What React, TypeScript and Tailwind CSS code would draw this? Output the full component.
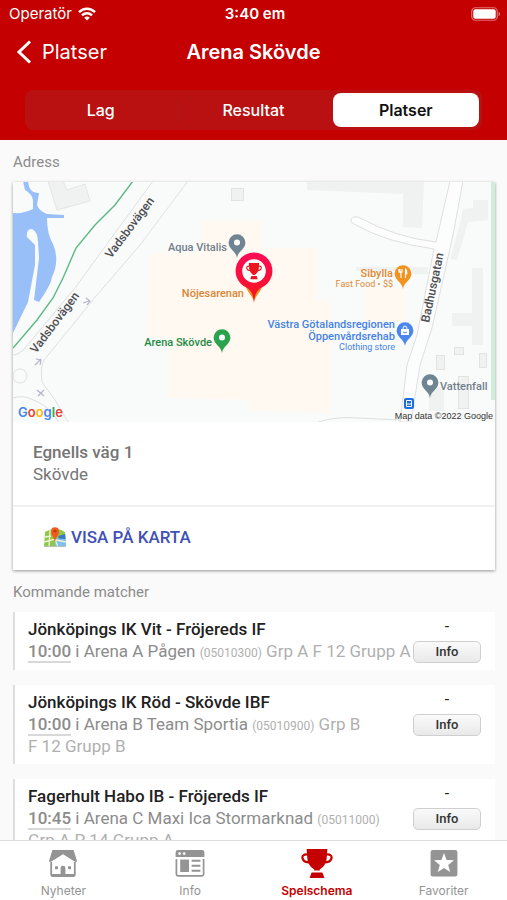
import { useState } from "react";
import type { ReactNode } from "react";
import clsx from "clsx";

type Match = {
  teams: string;
  time: string;
  place: string;
  id: string;
  group: string;
  division: string;
};

const matches: Match[] = [
  { teams: "Jönköpings IK Vit - Fröjereds IF", time: "10:00", place: "Arena A Pågen", id: "05010300", group: "Grp A", division: "F 12 Grupp A" },
  { teams: "Jönköpings IK Röd - Skövde IBF", time: "10:00", place: "Arena B Team Sportia", id: "05010900", group: "Grp B", division: "F 12 Grupp B" },
  { teams: "Fagerhult Habo IB - Fröjereds IF", time: "10:45", place: "Arena C Maxi Ica Stormarknad", id: "05011000", group: "Grp A", division: "P 14 Grupp A" },
];

const segments = ["Lag", "Resultat", "Platser"];

function WifiIcon() {
  return (
    <svg viewBox="0 0 18 14" className="h-3.5 w-[18px]" fill="none" stroke="currentColor" strokeWidth="2.5">
      <path d="M1 5.2 C5.5 0.6 12.5 0.6 17 5.2" />
      <path d="M4 8.4 C6.8 5.6 11.2 5.6 14 8.4" />
      <path d="M9 13.6 L6.2 10.7 C7.8 9.2 10.2 9.2 11.8 10.7 Z" fill="currentColor" stroke="none" />
    </svg>
  );
}

function BatteryIcon() {
  return (
    <svg viewBox="0 0 30 14" className="h-3.5 w-[30px]">
      <rect x="0.75" y="0.75" width="25.5" height="12.5" rx="3.6" fill="none" stroke="#fff" strokeOpacity="0.45" strokeWidth="1.2" />
      <rect x="2.3" y="2.3" width="22.4" height="9.4" rx="2" fill="#fff" />
      <path d="M27.6 4.8 C29.6 5.6 29.6 8.4 27.6 9.2 Z" fill="#fff" fillOpacity="0.5" />
    </svg>
  );
}

function TrophyShape() {
  return (
    <>
      <path d="M5.6 0 H26.4 L25.6 10 C25 15.5 21.5 19 18.8 20.2 V21.6 H13.2 V20.2 C10.5 19 7 15.5 6.4 10 Z" fill="currentColor" />
      <path d="M7 5.6 C3 4.8 0.8 6.8 1.6 9.6 C2.4 12.2 5.5 13.6 9.6 13.4 M25 5.6 C29 4.8 31.2 6.8 30.4 9.6 C29.6 12.2 26.5 13.6 22.4 13.4" fill="none" stroke="currentColor" strokeWidth="2.2" />
      <path d="M10.6 23.4 H21.4 L23.4 29 H8.6 Z" fill="currentColor" />
    </>
  );
}

function TrophyIcon() {
  return (
    <svg viewBox="0 0 32 29" className="h-[29px] w-8">
      <TrophyShape />
    </svg>
  );
}

function HouseIcon() {
  return (
    <svg viewBox="0 0 28 28" className="size-7" fill="currentColor">
      <path d="M3.4 1 H24.6 L28 12 C27.8 13 26.6 13.2 25.6 12.6 L14 5.2 L2.4 12.6 C1.4 13.2 0.2 13 0 12 Z" />
      <path d="M2.2 13 V25.2 C2.2 26.3 2.9 27 4 27 H24 C25.1 27 25.8 26.3 25.8 25.2 V13" fill="none" stroke="currentColor" strokeWidth="1.8" />
      <path d="M2 25 H26 V26.2 Q26 27.6 24.4 27.6 H3.6 Q2 27.6 2 26.2 Z" />
      <path d="M11.6 26 V19 Q11.6 16.8 14 16.8 Q16.4 16.8 16.4 19 V26 Z" />
      <rect x="6" y="17.2" width="3" height="3" rx="0.6" />
      <rect x="19" y="17.2" width="3" height="3" rx="0.6" />
    </svg>
  );
}

function NewsIcon() {
  return (
    <svg viewBox="0 0 30 28" className="h-7 w-[30px]" fill="currentColor">
      <path d="M3 1 H27 Q29.4 1 29.4 3.4 V8 H0.6 V3.4 Q0.6 1 3 1 Z" />
      <circle cx="4.6" cy="4.6" r="1.3" fill="#fff" />
      <circle cx="9.2" cy="4.6" r="1.3" fill="#fff" />
      <path d="M1.4 10 V25.2 Q1.4 26.8 3 26.8 H27 Q28.6 26.8 28.6 25.2 V10" fill="none" stroke="currentColor" strokeWidth="1.7" />
      <rect x="5.2" y="10.6" width="8.8" height="12.4" />
      <path d="M16.6 11.8 H25.4 M16.6 16.8 H25.4 M16.6 21.8 H25.4" stroke="currentColor" strokeWidth="1.9" />
    </svg>
  );
}

function StarIcon() {
  return (
    <svg viewBox="0 0 28 28" className="size-7">
      <rect x="0.6" y="1" width="26.8" height="26.4" rx="2.2" fill="currentColor" />
      <path d="M14 4 L16.6 11 L24 11.3 L18.2 15.9 L20.2 23 L14 18.9 L7.8 23 L9.8 15.9 L4 11.3 L11.4 11 Z" fill="#fff" />
    </svg>
  );
}

function MapEmoji() {
  return (
    <svg viewBox="0 0 24 24" className="size-6">
      <path d="M2 7 L7 4.5 L12 6 L17 4.5 L22 7 L23 22 H1 Z" fill="#8fc74a" />
      <path d="M12 14 L22.4 12 L23 22 H12 Z" fill="#7cc0f0" />
      <path d="M15 11 L22.2 9 L22.5 14 L16 13.5 Z" fill="#3b78c4" />
      <path d="M1.3 17 L12 14 L15 22 M7 5 L6 22 M2 12 L8 11 M13 15 L22.6 17" fill="none" stroke="#f3f1d4" strokeWidth="1.3" />
      <path d="M1 21.4 H23" stroke="#b9c3b4" strokeWidth="1" />
      <path d="M12 17 C11.4 12.4 8 10.6 8 6.2 A4 4 0 0 1 16 6.2 C16 10.6 12.6 12.4 12 17 Z" fill="#f05a1c" />
      <circle cx="12" cy="6" r="1.6" fill="#c23a10" />
    </svg>
  );
}

function Pin({ x, y, color, children }: { x: number; y: number; color: string; children?: ReactNode }) {
  return (
    <g transform={`translate(${x} ${y})`}>
      <path d="M0 15 C-1 8 -8.4 6.4 -8.4 -0.4 A8.4 8.4 0 0 1 8.4 -0.4 C8.4 6.4 1 8 0 15 Z" fill={color} />
      {children ?? <circle r="3" cy="-0.6" fill="#fff" />}
    </g>
  );
}

function AreaMap() {
  return (
    <svg
      viewBox="0 0 482 240"
      preserveAspectRatio="xMidYMid slice"
      className="block h-60 w-full bg-[#f9fafa] font-[Roboto,sans-serif]"
      role="img"
      aria-label="Karta"
    >
      <defs>
        <linearGradient id="pin" x1="0" y1="0" x2="0" y2="1">
          <stop offset="0" stopColor="#ff0a58" />
          <stop offset="1" stopColor="#f5161c" />
        </linearGradient>
      </defs>

      {/* buildings */}
      <g fill="#f0f1f1">
        <path d="M35 -1 L44 28 L77 19 L72 2 L54 8 L50 -1 Z" stroke="#e4e5e5" />
        <rect x="218.5" y="6.5" width="12" height="12" stroke="#e2e3e3" />
        <path d="M294 -1 V8 L390 12 V45 L409 46 L411 -1 Z" />
        <path d="M450 27 L460 26 V18 L475 18 V38 L455 40 L444 78 L437 77 L447 42 Z" />
        <path d="M459 86 H470 V163 H459 V144 H439 V131 H459 Z" />
        <path d="M343 85 H415 V92 H399 V89 H343 Z" />
        <g stroke="#e2e3e3">
          <rect x="423.5" y="173.5" width="8" height="14" />
          <rect x="441.5" y="165.5" width="9" height="7" />
          <rect x="466.5" y="171.5" width="7" height="14" />
          <rect x="445.5" y="194.5" width="10" height="32" />
        </g>
        <path d="M416 205 H431 V229 H416 Z" />
      </g>
      <path d="M189 38 H250 V66 H304 V118 H317 V231 L247 229 L235 226 V218 L155 216 V156 H134 L137 71 L189 70 Z" fill="#fff9f1" />
      <path d="M352 106 H392 V140 H352 Z" fill="#fff9f1" />

      {/* water and parkland */}
      <path
        d="M10 -1 L12 8 Q19 12 20 18 L20 27 Q10 32 0 31 V151 L15 120 L22 83 V63 L14 55 Q13 47 19 47 Q25 50 25 60 L26 76 L21 118 L26 120 Q38 103 39 95 Q47 78 40 62 Q34 52 34 36 L51 36 V33 L34 32 Q26 29 24 23 L26 11 Q16 12 15 -1 Z"
        fill="#99bff8"
      />
      <path d="M120 -1 L102 23 L82 43 L63 66 L50 96 L40 116 L24 138 L0 166" fill="none" stroke="#5cb885" strokeWidth="1.4" />
      <path d="M478 0 H482 V218 H478 Z" fill="#ceeedb" />

      {/* roads */}
      <g fill="none" stroke="#dedfe1">
        <path d="M140 -1 L102 51 L62 106 L12 166 Q6 173 0 173" />
        <path d="M175 -1 L127 63 L84 113 L31 178 Q27 184 29 200 L42 218 L55 240" />
        <circle cx="7" cy="194" r="7" />
        <path d="M0 216 Q10 213 18 217 Q32 222 40 232 L46 240" />
        <path d="M437 -1 L423 60 Q384 56 345 35 Q338 34 338 39 Q338 41 343 43 Q372 60 421 67 L404 153 L394 183 L387 240 H398 L407 183 L419 146 L440 53 L450 -1" fill="#fdfdfd" />
        <path d="M305 240 Q325 234 345 236 L387 238" />
      </g>
      <g fill="none" stroke="#b4b5cb" strokeWidth="1.2">
        <path d="M70 121 L76 119 M73 116 L77 119 L74 123" />
        <path d="M22 183 L28 177 M23 177 L28 178 L27 183" />
        <path d="M24 208 L31 214 M25 214 L31 208" />
      </g>

      <g fontSize="12" fontWeight="500" fill="#4c4e52">
        <text transform="translate(98 77) rotate(-53)">Vadsbovägen</text>
        <text transform="translate(23 172) rotate(-53)">Vadsbovägen</text>
        <text transform="translate(416 141) rotate(-78)">Badhusgatan</text>
      </g>

      {/* places */}
      <Pin x={224} y={61} color="#6f8594" />
      <Pin x={209} y={156} color="#2ba24c" />
      <Pin x={417} y={201} color="#6f8594" />
      <Pin x={390} y={92} color="#f0931f">
        <path d="M-3 -5 V-2 Q-3 -1 -2 -1 V4 M-4 -5 V-2 H-1 V-5 M2.5 4 V-5 Q4 -4 3.8 0 H2.5" fill="none" stroke="#fff" strokeWidth="1.1" />
      </Pin>
      <Pin x={392} y={149} color="#4a86ee">
        <path d="M-4 -2 H4 V4 H-4 Z" fill="#fff" />
        <path d="M-2 -2 Q-2 -5 0 -5 Q2 -5 2 -2" fill="none" stroke="#fff" />
        <path d="M-2 1 Q0 3 2 1" fill="none" stroke="#4a86ee" />
      </Pin>
      <g transform="translate(241 89)">
        <path d="M-8 15 H8 C7.500 20 3 23 0 30 C-3 23 -7.500 20 -8 15 Z" fill="#f0931f" />
        <path d="M0 32 C-0.6 25 -2 21 -6 17.400 A18.400 18.400 0 1 1 6 17.400 C2 21 0.6 25 0 32 Z" fill="url(#pin)" />
        <circle r="11.8" fill="#fff" />
        <g transform="translate(-8 -8) scale(0.5 0.56)" color="#ea1620">
          <TrophyShape />
        </g>
      </g>
      <rect x="391" y="216" width="10" height="11" rx="2" fill="#1a6ee0" />
      <path d="M393.5 218.5 H398.5 V224.5 H393.5 Z M393.5 222 H398.5" fill="none" stroke="#fff" />

      <g fontSize="11" fontWeight="500" textAnchor="end">
        <text x="214" y="69" fill="#71808d">Aqua Vitalis</text>
        <text x="231" y="115" fill="#d98538">Nöjesarenan</text>
        <text x="199" y="164" fill="#1f8a43">Arena Skövde</text>
        <text x="380" y="95" fill="#e08a32">Sibylla</text>
        <text x="380" y="105" fontSize="9" fontWeight="400" fill="#e08a32">Fast Food • $$</text>
        <text x="382" y="146" fill="#4583e6">Västra Götalandsregionen</text>
        <text x="382" y="158" fill="#4583e6">Öppenvårdsrehab</text>
        <text x="382" y="168" fontSize="9" fontWeight="400" fill="#4583e6">Clothing store</text>
      </g>
      <text x="427" y="208" fontSize="11" fontWeight="500" fill="#71808d">Vattenfall</text>
      <text x="480" y="237" fontSize="9" textAnchor="end" fill="#333" className="font-['Liberation_Sans',sans-serif]">Map data ©2022 Google</text>
      <text x="5" y="235" fontSize="13" fontWeight="600" className="font-[Inter,sans-serif]">
        <tspan fill="#4285f4">G</tspan>
        <tspan fill="#ea4335">o</tspan>
        <tspan fill="#fbbc05">o</tspan>
        <tspan fill="#4285f4">g</tspan>
        <tspan fill="#34a853">l</tspan>
        <tspan fill="#ea4335">e</tspan>
      </text>
    </svg>
  );
}

function MatchCard({ match }: { match: Match }) {
  return (
    <li className="flex border-l-2 border-[#dedede] bg-white pt-1.5 pr-3.5 pb-[7px] pl-[13px]">
      <div className="min-w-0 flex-1 text-[17px] leading-[22px] text-[#8c8c8c]">
        <h3 className="font-medium text-[#212121]">{match.teams}</h3>
        <p>
          <span className="border-b-2 border-[#d8d8d8] font-medium">{match.time}</span> i {match.place}{" "}
          <span className="text-xs leading-none text-[#b0b0b0]">({match.id})</span>{" "}
          <span className="text-[#b0b0b0]">
            <span className="whitespace-nowrap">{match.group}</span>{" "}
            <span className="whitespace-nowrap">{match.division}</span>
          </span>
        </p>
      </div>
      <div className="flex w-[68px] shrink-0 flex-col text-center">
        <span className="h-[23px] text-base leading-[18px] text-[#212121]">-</span>
        <button className="h-[22px] rounded-[5px] border border-[#cfcfcf] bg-linear-to-b from-[#fafafa] to-[#e9e9e9] text-[13px] font-medium leading-5 text-[#333]">
          Info
        </button>
      </div>
    </li>
  );
}

const tabs = [
  { label: "Nyheter", icon: <HouseIcon /> },
  { label: "Info", icon: <NewsIcon /> },
  { label: "Spelschema", icon: <TrophyIcon /> },
  { label: "Favoriter", icon: <StarIcon /> },
];

export default function App() {
  const [segment, setSegment] = useState("Platser");
  const [tab, setTab] = useState("Spelschema");

  return (
    <div className="flex h-screen flex-col bg-[#fafafa] font-[Roboto,sans-serif]">
      <header className="shrink-0 bg-[#c40000] pb-2.5 font-[Inter,sans-serif] text-white">
        {/* Status bar */}
        <div className="grid h-7 grid-cols-3 items-center pr-1.5 pl-[9px] text-[15px]">
          <div className="flex items-center gap-1.5">
            <span>Operatör</span>
            <WifiIcon />
          </div>
          <span className="text-center font-semibold">3:40 em</span>
          <div className="flex justify-end">
            <BatteryIcon />
          </div>
        </div>

        {/* Title */}
        <div className="grid h-12 grid-cols-[1fr_auto_1fr] items-center px-4">
          <button className="flex items-center gap-2.5 text-xl">
            <svg viewBox="0 0 16 24" className="h-6 w-4" fill="none" stroke="currentColor" strokeWidth="3">
              <path d="M14 1.5 L3 12 L14 22.5" />
            </svg>
            Platser
          </button>
          <h1 className="text-xl font-semibold">Arena Skövde</h1>
        </div>

        {/* Segments */}
        <div className="mx-[25px] mt-3.5 grid h-10 grid-cols-3 rounded-lg bg-[#b91011]">
          {segments.map((item, i) => (
            <button
              key={item}
              onClick={() => setSegment(item)}
              aria-pressed={segment === item}
              className={clsx(
                "text-base",
                segment === item ? "m-[3px] rounded-lg bg-white font-semibold text-[#111]" : "my-2 font-medium",
                i === 0 && segment === "Platser" && "border-r border-[#a81a1a]"
              )}
            >
              {item}
            </button>
          ))}
        </div>
      </header>

      <main className="min-h-0 flex-1 overflow-y-auto pr-3 pl-[13px] [scrollbar-width:none]">
        <h2 className="pt-3 pb-2.5 text-[15px] leading-5 text-[#8c8c8c]">Adress</h2>
        <section className="bg-white shadow-[0_1px_3px_rgba(0,0,0,0.4)]">
          <AreaMap />
          <address className="px-5 pt-[19px] pb-5 text-[17px] leading-[22px] text-[#757575] not-italic">
            <div className="font-medium">Egnells väg 1</div>
            <div>Skövde</div>
          </address>
          <div className="border-t-2 border-[#f0f0f0] pt-[18px] pb-[21px] pl-[30px]">
            <a href="#karta" className="inline-flex items-center gap-1 align-top text-[17px] font-medium leading-6 text-[#3f51b5]">
              <MapEmoji />
              VISA PÅ KARTA
            </a>
          </div>
        </section>

        <h2 className="pt-3 pb-2.5 text-[15px] leading-5 text-[#8c8c8c]">Kommande matcher</h2>
        <ul className="space-y-[15px]">
          {matches.map((match) => (
            <MatchCard key={match.id} match={match} />
          ))}
        </ul>
      </main>

      {/* Tab bar */}
      <nav className="flex h-[60px] shrink-0 border-t border-[#dcdcdc] bg-white font-[Inter,sans-serif]">
        {tabs.map(({ label, icon }) => (
          <button
            key={label}
            onClick={() => setTab(label)}
            className={clsx(
              "flex flex-1 flex-col items-center pt-2 text-xs",
              tab === label ? "font-semibold text-[#c40000]" : "text-[#949494]"
            )}
          >
            <span className="flex h-[34px] items-start">{icon}</span>
            <span className="leading-4">{label}</span>
          </button>
        ))}
      </nav>
    </div>
  );
}
